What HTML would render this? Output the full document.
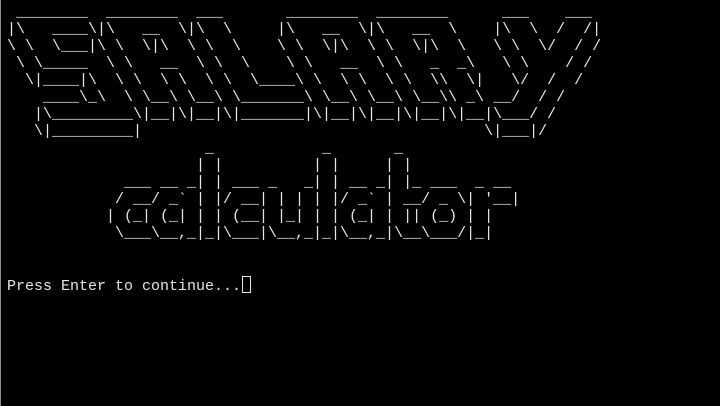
<!DOCTYPE html>
<html><head><meta charset="utf-8"><style>
html,body{margin:0;padding:0;background:#000;width:720px;height:406px;overflow:hidden}
body{border-left:1px solid #8a8a8a;box-sizing:border-box}
pre{margin:0;padding:4px 0 0 6px;font-family:"Liberation Mono",monospace;font-size:15px;line-height:17px;color:#e6e6e6;white-space:pre}
.cur{display:inline-block;width:7px;height:15px;border:1px solid #e6e6e6;vertical-align:-3px;margin-left:1px}
</style></head><body><pre> ________  ________  ___       ________  ________      ___    ___ 
|\   ____\|\   __  \|\  \     |\   __  \|\   __  \    |\  \  /  /|
\ \  \___|\ \  \|\  \ \  \    \ \  \|\  \ \  \|\  \   \ \  \/  / /
 \ \_____  \ \   __  \ \  \    \ \   __  \ \   _  _\   \ \    / / 
  \|____|\  \ \  \ \  \ \  \____\ \  \ \  \ \  \\  \|   \/  /  /  
    ____\_\  \ \__\ \__\ \_______\ \__\ \__\ \__\\ _\ __/  / /    
   |\_________\|__|\|__|\|_______|\|__|\|__|\|__|\|__|\___/ /     
   \|_________|                                      \|___|/      
                      _            _       _             
                     | |          | |     | |            
             ___ __ _| | ___ _   _| | __ _| |_ ___  _ __ 
            / __/ _` | |/ __| | | | |/ _` | __/ _ \| '__|
           | (_| (_| | | (__| |_| | | (_| | || (_) | |   
            \___\__,_|_|\___|\__,_|_|\__,_|\__\___/|_|   


Press Enter to continue...<span class="cur"></span></pre></body></html>
